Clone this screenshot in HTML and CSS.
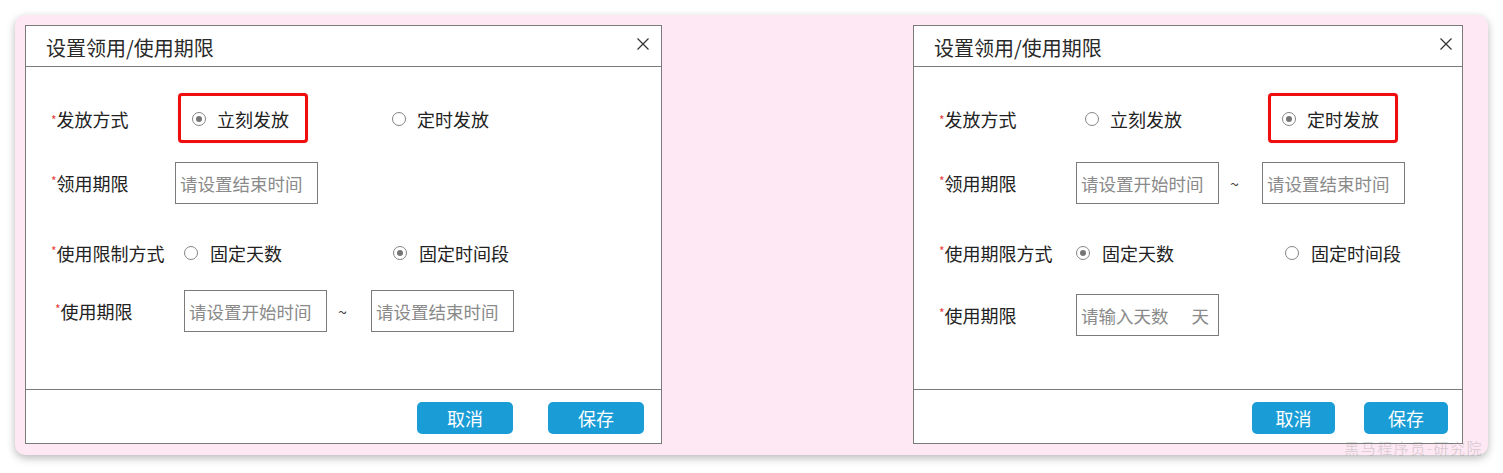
FILE: index.html
```html
<!DOCTYPE html>
<html lang="zh-CN">
<head>
<meta charset="utf-8">
<title>设置领用/使用期限</title>
<link rel="stylesheet" href="styles.css">
</head>
<body>
<div class="panel">
  <section class="dialog dialog-a">
    <header class="dlg-head">
      <span class="dlg-title">设置领用/使用期限</span>
      <svg class="close" width="12" height="12" viewBox="0 0 12 12"><path d="M0.5 0.5L11.5 11.5M11.5 0.5L0.5 11.5"/></svg>
    </header>
    <div class="dlg-body">
      <div class="row row-issue">
        <div class="label"><span class="req">*</span>发放方式</div>
        <div class="opt-box hl"><span class="radio checked"></span><span>立刻发放</span></div>
        <div class="opt-box second"><span class="radio"></span><span>定时发放</span></div>
      </div>
      <div class="row row-claim">
        <div class="label"><span class="req">*</span>领用期限</div>
        <input class="field" type="text" placeholder="请设置结束时间">
      </div>
      <div class="row row-mode">
        <div class="label"><span class="req">*</span>使用限制方式</div>
        <div class="opt"><span class="radio"></span><span>固定天数</span></div>
        <div class="opt"><span class="radio checked"></span><span>固定时间段</span></div>
      </div>
      <div class="row row-use">
        <div class="label"><span class="req">*</span>使用期限</div>
        <input class="field" type="text" placeholder="请设置开始时间">
        <span class="tilde">~</span>
        <input class="field" type="text" placeholder="请设置结束时间">
      </div>
    </div>
    <footer class="dlg-foot">
      <button class="btn">取消</button>
      <button class="btn">保存</button>
    </footer>
  </section>

  <section class="dialog dialog-b">
    <header class="dlg-head">
      <span class="dlg-title">设置领用/使用期限</span>
      <svg class="close" width="12" height="12" viewBox="0 0 12 12"><path d="M0.5 0.5L11.5 11.5M11.5 0.5L0.5 11.5"/></svg>
    </header>
    <div class="dlg-body">
      <div class="row row-issue">
        <div class="label"><span class="req">*</span>发放方式</div>
        <div class="opt-box"><span class="radio"></span><span>立刻发放</span></div>
        <div class="opt-box second hl"><span class="radio checked"></span><span>定时发放</span></div>
      </div>
      <div class="row row-claim">
        <div class="label"><span class="req">*</span>领用期限</div>
        <input class="field" type="text" placeholder="请设置开始时间">
        <span class="tilde">~</span>
        <input class="field" type="text" placeholder="请设置结束时间">
      </div>
      <div class="row row-mode">
        <div class="label"><span class="req">*</span>使用期限方式</div>
        <div class="opt"><span class="radio checked"></span><span>固定天数</span></div>
        <div class="opt"><span class="radio"></span><span>固定时间段</span></div>
      </div>
      <div class="row row-use">
        <div class="label"><span class="req">*</span>使用期限</div>
        <div class="field field-suffix"><input type="text" placeholder="请输入天数"><span class="suffix">天</span></div>
      </div>
    </div>
    <footer class="dlg-foot">
      <button class="btn">取消</button>
      <button class="btn">保存</button>
    </footer>
  </section>

  <div class="watermark">黑马程序员-研究院</div>
</div>
</body>
</html>
```
FILE: styles.css
```css
* { box-sizing: border-box; }

html, body {
  margin: 0;
  background: #ffffff;
}

body {
  padding: 15px;
  font-family: "Noto Sans CJK SC", "Noto Sans", sans-serif;
  color: #222;
}

.panel {
  position: relative;
  width: 1473px;
  height: 440px;
  padding: 10px;
  display: flex;
  gap: 251px;
  background: #fde8f3;
  border-radius: 10px;
  box-shadow: 0 3px 9px rgba(0, 0, 0, 0.28);
}

.dialog {
  height: 419px;
  background: #fff;
  border: 1px solid #7b7b7b;
  display: flex;
  flex-direction: column;
  flex: none;
}

.dialog-a { width: 637px; }
.dialog-b { width: 550px; }

.dlg-head {
  height: 41px;
  border-bottom: 1px solid #7b7b7b;
  display: flex;
  justify-content: space-between;
  align-items: center;
  padding: 0 12px 0 20px;
  flex: none;
}

.dialog-b .dlg-head { padding-right: 10px; }

.dlg-title {
  font-size: 20px;
  line-height: 26px;
  padding-top: 3px;
  color: #2a2a2a;
}

.close {
  align-self: flex-start;
  margin-top: 12px;
}

.close path {
  stroke: #333;
  stroke-width: 1.2;
  fill: none;
}

.dlg-body {
  flex: 1;
  padding: 26px 0 0 25px;
  display: flex;
  flex-direction: column;
  font-size: 18px;
}

.row {
  display: flex;
  align-items: center;
  height: 42px;
  flex: none;
}

.row > * { flex: none; }

.label {
  white-space: nowrap;
  color: #222;
}

.req {
  color: #e8413c;
  font-size: 12px;
  vertical-align: 5px;
}

/* Row 1 : 发放方式 */
.row-issue {
  height: 50px;
  align-items: stretch;
}

.row-issue .label {
  display: flex;
  align-items: center;
  padding-top: 2px;
}

.opt-box {
  width: 130px;
  height: 50px;
  display: flex;
  align-items: center;
  gap: 11px;
  padding: 2px 16px 0 11px;
  border: 3px solid transparent;
  border-radius: 4px;
  white-space: nowrap;
}

.opt-box.hl {
  border-color: #f00d0d;
  box-shadow: 0 0 1px rgba(200, 0, 0, 0.4);
}

.dialog-a .opt-box.second { margin-left: 70px; }
.dialog-b .opt-box.second { margin-left: 67px; }

/* Row 2 */
.row-claim { margin-top: 19px; }

/* Row 3 */
.row-mode { margin-top: 28px; }

.opt {
  width: 209px;
  display: flex;
  align-items: center;
  gap: 12px;
  white-space: nowrap;
}

/* Row 4 */
.row-use { margin-top: 16px; }
.dialog-b .row-use { margin-top: 20px; }

/* label column widths */
.dialog-a .row-issue .label { width: 127px; }
.dialog-a .row-claim .label { width: 124px; }
.dialog-a .row-mode .label { width: 133px; }
.dialog-a .row-use .label { width: 133px; padding-left: 4px; }

.dialog-b .label { width: 137px; }
.dialog-b .row-issue .label { width: 132px; }

.radio {
  width: 14px;
  height: 14px;
  border: 1px solid #858585;
  border-radius: 50%;
  background: #fff;
  display: flex;
  align-items: center;
  justify-content: center;
}

.radio.checked::after {
  content: "";
  width: 6px;
  height: 6px;
  border-radius: 50%;
  background: #757575;
}

.field {
  width: 143px;
  height: 42px;
  border: 1px solid #7b7b7b;
  background: #fff;
  padding: 0 4px;
  font-family: inherit;
  font-size: 17.5px;
  color: #333;
  outline: none;
  margin: 0;
  border-radius: 0;
}

.field::placeholder,
.field-suffix input::placeholder {
  color: #8a8a8a;
  opacity: 1;
}

.tilde {
  width: 44px;
  padding-left: 11px;
  font-size: 16px;
  color: #444;
}

.dialog-b .tilde { width: 43px; }

.field-suffix {
  display: flex;
  align-items: center;
  padding: 0 9px 0 4px;
}

.field-suffix input {
  flex: 1;
  min-width: 0;
  border: none;
  outline: none;
  padding: 0;
  margin: 0;
  font-family: inherit;
  font-size: 17.5px;
  background: transparent;
}

.suffix {
  font-size: 17.5px;
  color: #8a8a8a;
}

.dlg-foot {
  height: 54px;
  flex: none;
  border-top: 1px solid #7b7b7b;
  display: flex;
  justify-content: flex-end;
  align-items: flex-start;
  padding: 12px 17px 0 0;
  gap: 35px;
}

.dialog-b .dlg-foot {
  padding-right: 14px;
  gap: 29px;
}

.btn {
  width: 96px;
  height: 32px;
  border: none;
  border-radius: 5px;
  background: #1a9cd6;
  color: #fff;
  font-family: inherit;
  font-size: 18px;
  line-height: 32px;
  padding: 0;
  cursor: pointer;
}

.dialog-b .btn { width: 83px; }
.dialog-b .btn + .btn { width: 84px; }

.watermark {
  position: absolute;
  right: 5px;
  bottom: 0;
  font-size: 15px;
  line-height: 15px;
  letter-spacing: 1.5px;
  color: rgba(140, 140, 140, 0.3);
  white-space: nowrap;
}
```
